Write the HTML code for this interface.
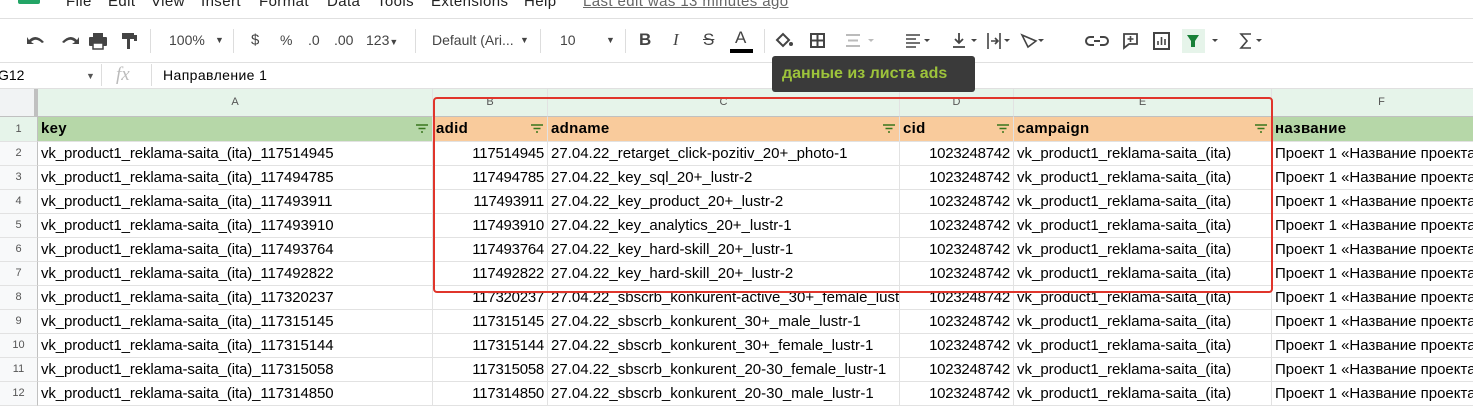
<!DOCTYPE html>
<html><head><meta charset="utf-8"><style>
*{margin:0;padding:0;box-sizing:border-box}
body{width:1473px;height:407px;overflow:hidden;background:#fff;font-family:"Liberation Sans",Arial,sans-serif;position:relative;color:#000}
.abs{position:absolute}
.menu{top:-7px;font-size:15px;color:#222;letter-spacing:0.4px}
.tb{top:40px;font-size:14px;color:#444;transform:translateY(-50%)}
.sep{position:absolute;top:29px;width:1px;height:24px;background:#ddd}
.grid{position:absolute;left:0;top:89px}
.c{position:absolute;overflow:hidden;white-space:nowrap;font-size:15px;letter-spacing:0;line-height:23px;padding:0 3px;border-right:1px solid #e2e2e2;border-bottom:1px solid #e2e2e2}
.k{letter-spacing:-0.1px}
.r{text-align:right;letter-spacing:-0.25px}
.rn{text-align:center;color:#555;font-size:11px;letter-spacing:0;background:#f8f9fa;border-right:1px solid #c0c0c0}
.ch{text-align:center;color:#555;font-size:11px;letter-spacing:0;background:#e6f4ea;line-height:27px;border-bottom:1px solid #c0c0c0}
.h{font-weight:bold;letter-spacing:0.3px}
.f{position:absolute;right:4px;top:7px;width:12px;height:9px}
</style></head><body>
<div class="abs" style="left:18px;top:-8px;width:22px;height:12px;background:#23a566;border-radius:2px"></div>
<div class="abs menu" style="left:66px">File</div>
<div class="abs menu" style="left:108px">Edit</div>
<div class="abs menu" style="left:151px">View</div>
<div class="abs menu" style="left:201px">Insert</div>
<div class="abs menu" style="left:259px">Format</div>
<div class="abs menu" style="left:327px">Data</div>
<div class="abs menu" style="left:377px">Tools</div>
<div class="abs menu" style="left:431px">Extensions</div>
<div class="abs menu" style="left:524px">Help</div>
<div class="abs menu" style="left:583px;color:#666;text-decoration:underline">Last edit was 13 minutes ago</div>
<div class="abs" style="left:0;top:18px;width:1473px;height:1px;background:#e0e0e0"></div>
<div class="abs" style="left:0;top:62px;width:1473px;height:1px;background:#e0e0e0"></div>
<div class="abs" style="left:0;top:88px;width:1473px;height:1px;background:#e0e0e0"></div>
<svg class="abs" style="left:24px;top:30px" width="120" height="22" viewBox="0 0 120 22" fill="#444">
<path d="M5 10 Q12 3 20 12 L18 13 Q12 7 7 12 L10 14 L3 14 L3 7 Z"/>
<path d="M53 10 Q46 3 38 12 L40 13 Q46 7 51 12 L48 14 L55 14 L55 7 Z"/>
<rect x="65" y="7" width="18" height="9" rx="1"/><rect x="69" y="3" width="10" height="4"/><rect x="69" y="13" width="10" height="6" fill="#fff" stroke="#444" stroke-width="1.5"/>
<rect x="98" y="3" width="12" height="6"/><rect x="103" y="9" width="3" height="10"/><rect x="110" y="5" width="3" height="6"/>
</svg>
<div class="sep" style="left:150px"></div>
<div class="abs tb" style="left:169px">100%</div><div class="abs tb" style="left:215px;font-size:9px">▼</div>
<div class="sep" style="left:233px"></div>
<div class="abs tb" style="left:251px;font-size:15px">$</div>
<div class="abs tb" style="left:280px">%</div>
<div class="abs tb" style="left:308px">.0</div>
<div class="abs tb" style="left:334px">.00</div>
<div class="abs tb" style="left:366px">123<span style="font-size:9px">▼</span></div>
<div class="sep" style="left:415px"></div>
<div class="abs tb" style="left:432px">Default (Ari...</div><div class="abs tb" style="left:520px;font-size:9px">▼</div>
<div class="sep" style="left:540px"></div>
<div class="abs tb" style="left:560px">10</div><div class="abs tb" style="left:606px;font-size:9px">▼</div>
<div class="sep" style="left:625px"></div>
<div class="abs tb" style="left:639px;font-weight:bold;font-size:17px">B</div>
<div class="abs tb" style="left:673px;font-style:italic;font-size:17px;font-family:'Liberation Serif'">I</div>
<div class="abs tb" style="left:703px;text-decoration:line-through;font-size:17px">S</div>
<div class="abs tb" style="left:735px;font-size:17px;top:38px">A</div>
<div class="abs" style="left:730px;top:49px;width:23px;height:4px;background:#000"></div>
<div class="sep" style="left:764px"></div>
<svg class="abs" style="left:772px;top:29px" width="500" height="24" viewBox="0 0 500 24" fill="#444" stroke="#444">
<path d="M5 11 L11 5 L17 11 L11 17 Z" stroke-width="2" fill="none"/><circle cx="19" cy="15" r="2" stroke="none"/>
<rect x="39" y="5" width="13" height="13" fill="none" stroke-width="2"/><path d="M45.5 5v13M39 11.5h13" stroke-width="2"/>
<path d="M74 6h14M74 17h14M76 11.5h10" stroke="#bbb" stroke-width="2"/><path d="M96 10l3 3 3-3z" fill="#bbb" stroke="none"/>
<path d="M134 6h14M134 10h10M134 14h14M134 18h10" stroke-width="1.6"/><path d="M152 10l3 3 3-3z" stroke="none"/>
<path d="M187 4v10M183 10l4 4 4-4M181 18h12" stroke-width="1.8" fill="none"/><path d="M199 10l3 3 3-3z" stroke="none"/>
<path d="M216 4v16M228 4v16M219 12h7M223 9l3 3-3 3" stroke-width="1.6" fill="none"/><path d="M232 10l3 3 3-3z" stroke="none"/>
<path d="M250 6l14 6-8 6z" stroke-width="1.6" fill="none"/><path d="M266 10l3 3 3-3z" stroke="none"/>
<path d="M322 8h-4a4 4 0 000 8h4M328 8h4a4 4 0 010 8h-4M322 12h6" stroke-width="2" fill="none"/>
<path d="M352 5h13v10h-8l-5 4z" stroke-width="1.8" fill="none"/><path d="M358.5 7v6M355.5 10h6" stroke-width="1.6"/>
<rect x="382" y="4" width="15" height="16" fill="none" stroke-width="2"/><path d="M386 16v-4M389.5 16v-8M393 16v-6" stroke-width="1.6"/>
<rect x="410" y="-3" width="23" height="30" fill="#e6f4ea" stroke="none"/>
<path d="M415 6h12l-4 6v6h-4v-6z" fill="#188038" stroke="none"/><path d="M440 10l3 3 3-3z" stroke="none"/>
<path d="M479 5h-10l6 7-6 7h10" stroke-width="1.6" fill="none"/><path d="M484 10l3 3 3-3z" stroke="none"/>
</svg>
<div class="abs" style="left:-2px;top:67px;font-size:14px">G12</div>
<div class="abs" style="left:86px;top:71px;font-size:9px;color:#555">▼</div>
<div class="abs" style="left:101px;top:64px;width:1px;height:22px;background:#ddd"></div>
<div class="abs" style="left:116px;top:64px;font-size:19px;color:#bbb;font-style:italic;font-family:'Liberation Serif'">fx</div>
<div class="abs" style="left:151px;top:64px;width:1px;height:22px;background:#ddd"></div>
<div class="abs" style="left:163px;top:67px;font-size:14px;letter-spacing:0.4px">Направление 1</div>
<div class="grid" id="g"></div>
<div class="abs" style="left:772px;top:56px;width:203px;height:36px;background:#3a3a3a;border-radius:3px;color:#9dc33b;font-size:16px;font-weight:bold;line-height:36px;padding-left:10px">данные из листа ads</div>
<div class="abs" style="left:433px;top:97px;width:840px;height:196px;border:2px solid #e0352b;border-radius:4px"></div>
<script>
const cols=[[0,38],[38,395],[433,115],[548,352],[900,114],[1014,258],[1272,220]];
const rows=[
["key","adid","adname","cid","campaign","название"],
["vk_product1_reklama-saita_(ita)_117514945","117514945","27.04.22_retarget_click-pozitiv_20+_photo-1","1023248742","vk_product1_reklama-saita_(ita)","Проект 1 «Название проекта"],
["vk_product1_reklama-saita_(ita)_117494785","117494785","27.04.22_key_sql_20+_lustr-2","1023248742","vk_product1_reklama-saita_(ita)","Проект 1 «Название проекта"],
["vk_product1_reklama-saita_(ita)_117493911","117493911","27.04.22_key_product_20+_lustr-2","1023248742","vk_product1_reklama-saita_(ita)","Проект 1 «Название проекта"],
["vk_product1_reklama-saita_(ita)_117493910","117493910","27.04.22_key_analytics_20+_lustr-1","1023248742","vk_product1_reklama-saita_(ita)","Проект 1 «Название проекта"],
["vk_product1_reklama-saita_(ita)_117493764","117493764","27.04.22_key_hard-skill_20+_lustr-1","1023248742","vk_product1_reklama-saita_(ita)","Проект 1 «Название проекта"],
["vk_product1_reklama-saita_(ita)_117492822","117492822","27.04.22_key_hard-skill_20+_lustr-2","1023248742","vk_product1_reklama-saita_(ita)","Проект 1 «Название проекта"],
["vk_product1_reklama-saita_(ita)_117320237","117320237","27.04.22_sbscrb_konkurent-active_30+_female_lustr-1","1023248742","vk_product1_reklama-saita_(ita)","Проект 1 «Название проекта"],
["vk_product1_reklama-saita_(ita)_117315145","117315145","27.04.22_sbscrb_konkurent_30+_male_lustr-1","1023248742","vk_product1_reklama-saita_(ita)","Проект 1 «Название проекта"],
["vk_product1_reklama-saita_(ita)_117315144","117315144","27.04.22_sbscrb_konkurent_30+_female_lustr-1","1023248742","vk_product1_reklama-saita_(ita)","Проект 1 «Название проекта"],
["vk_product1_reklama-saita_(ita)_117315058","117315058","27.04.22_sbscrb_konkurent_20-30_female_lustr-1","1023248742","vk_product1_reklama-saita_(ita)","Проект 1 «Название проекта"],
["vk_product1_reklama-saita_(ita)_117314850","117314850","27.04.22_sbscrb_konkurent_20-30_male_lustr-1","1023248742","vk_product1_reklama-saita_(ita)","Проект 1 «Название проекта"]];
let h='';
const L=['','A','B','C','D','E','F'];
cols.forEach((c,i)=>{h+=`<div class="c ch" style="left:${c[0]}px;top:0;width:${c[1]}px;height:28px;${i==0?'background:#f1f3f4;border-right:4px solid #c0c0c0':''}">${L[i]}</div>`});
const flt='<svg class="f" viewBox="0 0 12 9"><path d="M0 1h12M2.5 4.5h7M5 8h2" stroke="#38761d" stroke-width="1.5"/></svg>';
rows.forEach((r,ri)=>{const top=28+ri*24+(ri>0?1:0);const hh=ri==0?25:24;
h+=`<div class="c rn" style="left:0;top:${top}px;width:38px;height:${hh}px;line-height:${hh-1}px;${ri==0?'background:#e6f4ea':''}">${ri+1}</div>`;
r.forEach((t,ci)=>{const c=cols[ci+1];let cls='c',st='';
if(ri==0){cls+=' h';st=(ci==0||ci==5)?'background:#b6d7a8;':'background:#f9cb9c;';}
else if(ci==1||ci==3)cls+=' r';
else if(ci==0)cls+=' k';
h+=`<div class="${cls}" style="left:${c[0]}px;top:${top}px;width:${c[1]}px;height:${hh}px;line-height:${hh-1}px;${st}">${t}${ri==0&&ci<5?flt:''}</div>`;});});
document.getElementById('g').innerHTML=h;
</script>
</body></html>
